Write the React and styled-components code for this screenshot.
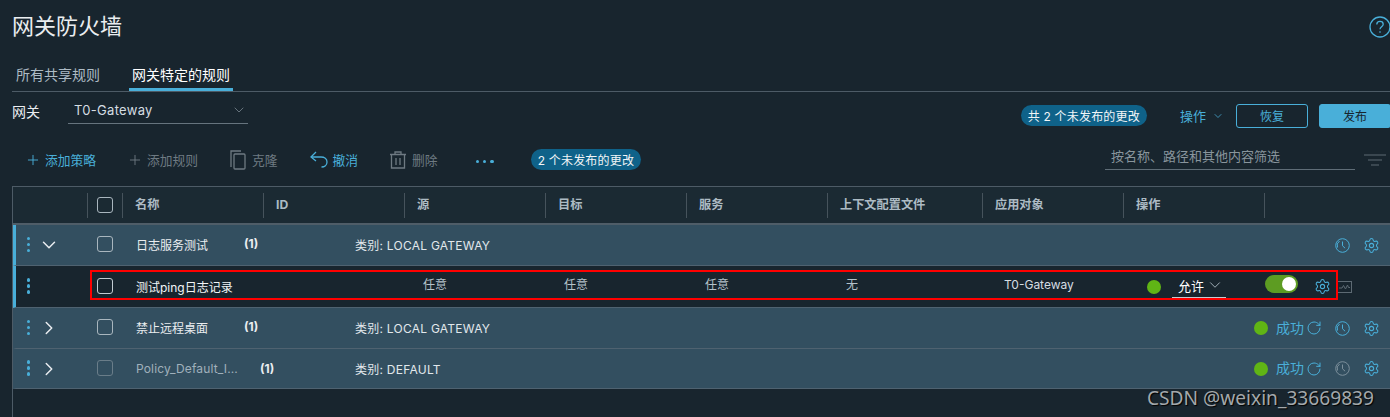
import React from 'react';
import styled, { createGlobalStyle } from 'styled-components';
import { Plus, ChevronDown, ChevronRight, RotateCw, Settings } from 'lucide-react';

const BLUE = '#49afd9';
const COLS = '75px 35px 141px 141px 141px 141px 141px 155px 141px 141px 1fr';
const RULE_COLS = '72px 35px 141px 141px 141px 141px 141px 155px 141px 141px 1fr';
const GROUP_COLS = '72px 35px 232px 1fr auto';

const Global = createGlobalStyle`
  html, body { margin: 0; padding: 0; background: #18252e; }
  body {
    font-family: "Inter", "Noto Sans CJK SC", sans-serif;
    color: #e0e6ea;
    overflow: hidden;
  }
`;

const Page = styled.div`
  position: relative;
  width: 1390px;
  height: 417px;
  overflow: hidden;
  background: #18252e;
`;

const TitleBar = styled.div`
  display: flex;
  justify-content: space-between;
  align-items: center;
  height: 53px;
  padding: 0 0 0 12px;
`;

const Title = styled.h1`
  margin: -6px 0 0;
  font-size: 22px;
  font-weight: 400;
  color: #eaedf0;
`;

const HelpButton = styled.span`
  display: flex;
  margin-right: -1px;
  margin-top: 1px;
  color: ${BLUE};
`;

const Tabs = styled.div`
  display: flex;
  height: 38px;
  margin-left: 12px;
  border-bottom: 1px solid #4d5b66;
`;

const Tab = styled.div`
  display: flex;
  align-items: center;
  height: 38px;
  margin-right: ${(p) => (p.$active ? 0 : '26px')};
  padding: 7px 3px 0 ${(p) => (p.$active ? '3px' : '4px')};
  box-sizing: border-box;
  font-size: 14px;
  color: ${(p) => (p.$active ? '#ffffff' : '#adbbc4')};
  border-bottom: 3px solid ${(p) => (p.$active ? BLUE : 'transparent')};
`;

const GatewayBar = styled.div`
  display: flex;
  align-items: center;
  height: 37px;
  padding-left: 12px;
`;

const FieldLabel = styled.span`
  width: 56px;
  font-size: 14px;
  color: #eaedf0;
`;

const Select = styled.div`
  display: flex;
  align-items: center;
  justify-content: space-between;
  box-sizing: border-box;
  width: 180px;
  height: 26px;
  padding: 0 1px 0 6px;
  border-bottom: 1px solid #66747e;
  font-size: 13px;
  letter-spacing: 0.3px;
  color: #d5dde2;
`;

const Spacer = styled.div`
  flex: 1;
`;

const PublishGroup = styled.div`
  display: flex;
  align-items: center;
  margin-top: 10px;
  margin-right: -1px;
`;

const Badge = styled.span`
  display: inline-flex;
  align-items: center;
  height: 21px;
  padding: 0 7px;
  border-radius: 11px;
  background: #0f6289;
  color: #f2f5f7;
  font-size: 12px;
  letter-spacing: 0.2px;
  white-space: nowrap;
`;

const ActionsMenu = styled.span`
  display: flex;
  align-items: center;
  gap: 6px;
  margin-left: 33px;
  font-size: 13px;
  color: ${BLUE};
`;

const OutlineButton = styled.button`
  flex-shrink: 0;
  width: 72px;
  height: 24px;
  margin-left: 12px;
  padding: 0;
  border: 1px solid ${BLUE};
  border-radius: 3px;
  background: transparent;
  color: ${BLUE};
  font: inherit;
  font-size: 12px;
`;

const PrimaryButton = styled(OutlineButton)`
  margin-left: 11px;
  background: ${BLUE};
  color: #18252e;
`;

const Toolbar = styled.div`
  display: flex;
  align-items: center;
  gap: 32px;
  height: 58px;
  padding: 3px 5px 0 25px;
  box-sizing: border-box;
  position: relative;
`;

const ToolButton = styled.span`
  display: flex;
  align-items: center;
  gap: ${(p) => p.$gap || 6}px;
  margin-right: ${(p) => p.$after || 0}px;
  font-size: 12.75px;
  color: ${(p) => (p.$disabled ? '#6e7a82' : BLUE)};
  white-space: nowrap;
`;

const MoreDots = styled.span`
  display: flex;
  gap: 4px;
  margin: 4px 5px 0 6px;
  span {
    width: 3.4px;
    height: 3.4px;
    border-radius: 50%;
    background: ${BLUE};
  }
`;

const FilterInput = styled.div`
  width: 250px;
  box-sizing: border-box;
  height: 26px;
  padding: 0 6px;
  margin-top: -6px;
  border-bottom: 1px solid #5f6d77;
  font-size: 13px;
  line-height: 24px;
  color: #89959d;
  white-space: nowrap;
`;

const FilterIcon = styled.span`
  display: flex;
  margin-left: -23px;
  margin-right: -1px;
  color: #46535c;
`;

const Table = styled.div`
  margin-left: 12px;
  border-top: 1px solid #4d5b66;
  border-left: 1px solid #4d5b66;
  margin-top: -1px;
  height: 232px;
`;

const HeaderRow = styled.div`
  display: grid;
  grid-template-columns: ${COLS};
  align-items: center;
  height: 36px;
  background: #1b2a33;
  border-bottom: 2px solid #4f5d68;
`;

const HeaderCell = styled.div`
  display: flex;
  align-items: center;
  box-sizing: border-box;
  height: 25px;
  padding-left: ${(p) => (p.$check ? '9px' : '12px')};
  padding-bottom: ${(p) => (p.$check ? '0' : '2px')};
  border-right: 1px solid #46535c;
  font-size: 12.2px;
  font-weight: 700;
  color: #adbbc4;
  white-space: nowrap;
`;

const Row = styled.div`
  display: grid;
  grid-template-columns: ${(p) => (p.$rule ? RULE_COLS : GROUP_COLS)};
  align-items: center;
  box-sizing: border-box;
  height: ${(p) => p.$h}px;
  background: ${(p) => (p.$rule ? '#18252e' : '#334f60')};
  border-bottom: 1px solid #4f6270;
  border-left: 3px solid ${(p) => (p.$accent ? BLUE : 'transparent')};
  font-size: 12px;
`;

const RowLead = styled.div`
  display: flex;
  align-items: center;
  padding-left: 11px;
  gap: 7px;
  color: #eaedf0;
`;

const Handle = styled.span`
  display: flex;
  flex-direction: column;
  gap: 2.6px;
  width: 4px;
  margin-top: -1px;
  span {
    width: 3.3px;
    height: 3.3px;
    border-radius: 50%;
    background: ${BLUE};
  }
`;

const Checkbox = styled.span`
  display: block;
  box-sizing: border-box;
  width: 16px;
  height: 16px;
  margin-left: ${(p) => (p.$head ? '0' : '9px')};
  margin-top: ${(p) => (p.$head ? '0' : '-2px')};
  border: 1px solid ${(p) => (p.$faded ? '#6a7d89' : '#a9b6be')};
  border-radius: 3px;
  ${(p) => p.$rule && 'border-color: #c3ccd2;'}
`;

const NameCell = styled.div`
  display: flex;
  margin-top: -1px;
  padding-left: 13px;
  color: ${(p) => (p.$faded ? '#a0b0bb' : '#eaedf0')};
  white-space: nowrap;
`;

const PolicyName = styled.span`
  width: ${(p) => p.$w}px;
  letter-spacing: ${(p) => (p.$faded ? '0.15px' : '0')};
`;

const Count = styled.span`
  font-weight: 700;
  color: #eaedf0;
`;

const Category = styled.div`
  margin-top: -1px;
  color: #e2e8ec;
  letter-spacing: 0.25px;
  white-space: nowrap;
`;

const GroupActions = styled.div`
  display: flex;
  align-items: center;
  padding-right: 10.5px;
  color: ${BLUE};
`;

const StatusDot = styled.span`
  display: block;
  width: 14px;
  height: 14px;
  border-radius: 50%;
  background: #60b515;
`;

const StatusText = styled.span`
  margin-left: 8px;
  margin-top: -3px;
  font-size: 14px;
  color: ${BLUE};
`;

const IconSlot = styled.span`
  display: flex;
  margin-left: ${(p) => p.$left || 0}px;
  margin-top: ${(p) => p.$top || 0}px;
  color: ${(p) => p.$color || BLUE};
`;

const RuleName = styled.div`
  grid-column: 3 / span 2;
  padding-left: 13px;
  color: #f2f5f7;
  white-space: nowrap;
`;

const RuleCell = styled.div`
  padding-left: ${(p) => p.$left || 18}px;
  margin-top: -7px;
  color: #b5c2ca;
  white-space: nowrap;
`;

const GatewayCell = styled(RuleCell)`
  margin-top: -4px;
  color: #d5dde2;
`;

const ActionCell = styled.div`
  display: flex;
  align-items: center;
  padding-left: 23px;
`;

const ActionSelect = styled.div`
  display: flex;
  align-items: center;
  justify-content: space-between;
  box-sizing: border-box;
  width: 54px;
  height: 23px;
  margin-left: 11px;
  margin-top: -1px;
  padding: 0 2px 1px 6px;
  border-bottom: 1px solid #c3ccd2;
  font-size: 13px;
  color: #ffffff;
`;

const ToggleCell = styled.div`
  display: flex;
  align-items: center;
`;

const Toggle = styled.span`
  display: block;
  position: relative;
  flex-shrink: 0;
  width: 33px;
  height: 18px;
  margin-top: -5px;
  border-radius: 9px;
  background: #5d9c22;
  &::after {
    content: '';
    position: absolute;
    right: 2px;
    top: 2px;
    width: 14px;
    height: 14px;
    border-radius: 50%;
    background: #fff;
  }
`;

const RedBox = styled.div`
  position: absolute;
  left: 90px;
  top: 270px;
  width: 1248px;
  height: 30px;
  box-sizing: border-box;
  border: 2px solid #ff0000;
  pointer-events: none;
`;

const Watermark = styled.div`
  position: absolute;
  right: 16px;
  bottom: 6px;
  font-family: "Noto Sans", sans-serif;
  font-size: 19.15px;
  color: #a3a8ab;
  text-shadow: 1px 1px 1px #000;
  white-space: nowrap;
`;

const Dragger = () => (
  <Handle>
    <span />
    <span />
    <span />
  </Handle>
);

const HelpIcon = () => (
  <svg width="22" height="22" viewBox="0 0 22 22" fill="none" stroke="currentColor" strokeWidth="1.3">
    <circle cx="11" cy="11" r="10" />
    <path d="M7.8 8.4c0-1.9 1.4-3 3.2-3s3.2 1.1 3.2 2.8c0 2.4-3.2 2.5-3.2 5" />
    <path d="M11 15.2v1.6" />
  </svg>
);

const CopyIcon = () => (
  <svg width="16" height="20" viewBox="0 0 16 20" fill="none" stroke="currentColor" strokeWidth="1.3">
    <path d="M1 17V1h10" />
    <rect x="4" y="4" width="11" height="15" rx="1" />
  </svg>
);

const UndoIcon = () => (
  <svg width="18" height="17" viewBox="0 0 18 17" fill="none" stroke="currentColor" strokeWidth="1.3">
    <path d="M6 1 1 6l5 4" />
    <path d="M1.5 6H11c3.4 0 6 1.9 6 5s-2.4 5-5.5 5" />
  </svg>
);

const TrashIcon = () => (
  <svg width="16" height="18" viewBox="0 0 16 18" fill="none" stroke="currentColor" strokeWidth="1.3">
    <path d="M0 3.5h16M5 3.5V1h6v2.5" />
    <path d="M1.5 3.5V17h13V3.5M6 7v7M10 7v7" />
  </svg>
);

const FilterLines = () => (
  <svg width="22" height="12" viewBox="0 0 22 12" stroke="currentColor" strokeWidth="1.5">
    <path d="M0 1h22M4 6h14M7 11h8" />
  </svg>
);

const ClockIcon = () => (
  <svg width="15" height="15" viewBox="0 0 15 15" fill="none" stroke="currentColor" strokeWidth="1">
    <circle cx="7.5" cy="7.5" r="6.8" />
    <path d="M2.5 9.5a5.4 5.4 0 0 1 2-6.4" />
    <path d="M7.5 3.5v4.3l2.6 2.4" />
  </svg>
);

const GraphIcon = () => (
  <svg width="15" height="12" viewBox="0 0 15 12" fill="none" stroke="currentColor" strokeWidth="1">
    <rect x="0.5" y="0.5" width="14" height="11" />
    <path d="M2 7h3l1.5-2.5L8.5 8 10.5 4l1 2.5H13" />
  </svg>
);

const Group = ({ name, width, category, faded, status, accent, h, chevron: Chevron, clockColor }) => (
  <Row $h={h} $accent={accent}>
    <RowLead>
      <Dragger />
      <Chevron size={22} strokeWidth={1.6} />
    </RowLead>
    <Checkbox $faded={faded} />
    <NameCell $faded={faded}>
      <PolicyName $w={width} $faded={faded}>
        {name}
      </PolicyName>
      <Count>(1)</Count>
    </NameCell>
    <Category>{category}</Category>
    <GroupActions>
      {status && (
        <>
          <StatusDot />
          <StatusText>成功</StatusText>
          <IconSlot $left={2}>
            <RotateCw size={16} strokeWidth={1.5} />
          </IconSlot>
        </>
      )}
      <IconSlot $left={13} $color={clockColor}>
        <ClockIcon />
      </IconSlot>
      <IconSlot $left={12.5}>
        <Settings size={17} strokeWidth={1.5} />
      </IconSlot>
    </GroupActions>
  </Row>
);

export default function App() {
  return (
    <Page>
      <Global />
      <TitleBar>
        <Title>网关防火墙</Title>
        <HelpButton>
          <HelpIcon />
        </HelpButton>
      </TitleBar>
      <Tabs>
        <Tab>所有共享规则</Tab>
        <Tab $active>网关特定的规则</Tab>
      </Tabs>
      <GatewayBar>
        <FieldLabel>网关</FieldLabel>
        <Select>
          T0-Gateway
          <ChevronDown size={16} strokeWidth={1.2} color="#7b8891" />
        </Select>
        <Spacer />
        <PublishGroup>
          <Badge>共 2 个未发布的更改</Badge>
          <ActionsMenu>
            操作
            <ChevronDown size={12} strokeWidth={1.5} />
          </ActionsMenu>
          <OutlineButton>恢复</OutlineButton>
          <PrimaryButton>发布</PrimaryButton>
        </PublishGroup>
      </GatewayBar>
      <Toolbar>
        <ToolButton $gap={4} $after={-1}>
          <Plus size={16} strokeWidth={1.4} />
          添加策略
        </ToolButton>
        <ToolButton $gap={4} $disabled>
          <Plus size={16} strokeWidth={1.4} />
          添加规则
        </ToolButton>
        <ToolButton $disabled>
          <CopyIcon />
          克隆
        </ToolButton>
        <ToolButton $gap={5}>
          <UndoIcon />
          撤消
        </ToolButton>
        <ToolButton $disabled>
          <TrashIcon />
          删除
        </ToolButton>
        <MoreDots>
          <span />
          <span />
          <span />
        </MoreDots>
        <Badge>2 个未发布的更改</Badge>
        <Spacer />
        <FilterInput>按名称、路径和其他内容筛选</FilterInput>
        <FilterIcon>
          <FilterLines />
        </FilterIcon>
      </Toolbar>
      <Table>
        <HeaderRow>
          <HeaderCell />
          <HeaderCell $check>
            <Checkbox $head />
          </HeaderCell>
          <HeaderCell>名称</HeaderCell>
          <HeaderCell>ID</HeaderCell>
          <HeaderCell>源</HeaderCell>
          <HeaderCell>目标</HeaderCell>
          <HeaderCell>服务</HeaderCell>
          <HeaderCell>上下文配置文件</HeaderCell>
          <HeaderCell>应用对象</HeaderCell>
          <HeaderCell>操作</HeaderCell>
        </HeaderRow>
        <Group
          h={41}
          accent
          name="日志服务测试"
          width={108}
          category="类别: LOCAL GATEWAY"
          chevron={ChevronDown}
        />
        <Row $rule $accent $h={42}>
          <RowLead>
            <Dragger />
          </RowLead>
          <Checkbox $rule />
          <RuleName>测试ping日志记录</RuleName>
          <RuleCell>任意</RuleCell>
          <RuleCell>任意</RuleCell>
          <RuleCell>任意</RuleCell>
          <RuleCell>无</RuleCell>
          <GatewayCell $left={21}>T0-Gateway</GatewayCell>
          <ActionCell>
            <StatusDot />
            <ActionSelect>
              允许
              <ChevronDown size={18} strokeWidth={1.2} color="#adbbc4" />
            </ActionSelect>
          </ActionCell>
          <ToggleCell>
            <Toggle />
            <IconSlot $left={15.5}>
              <Settings size={17} strokeWidth={1.5} />
            </IconSlot>
            <IconSlot $left={6.5} $color="#5d6a73">
              <GraphIcon />
            </IconSlot>
          </ToggleCell>
        </Row>
        <Group
          h={41}
          name="禁止远程桌面"
          width={108}
          category="类别: LOCAL GATEWAY"
          status
          chevron={ChevronRight}
        />
        <Group
          h={40}
          faded
          name="Policy_Default_I..."
          width={124}
          category="类别: DEFAULT"
          status
          clockColor="#7d909c"
          chevron={ChevronRight}
        />
      </Table>
      <RedBox />
      <Watermark>CSDN @weixin_33669839</Watermark>
    </Page>
  );
}
